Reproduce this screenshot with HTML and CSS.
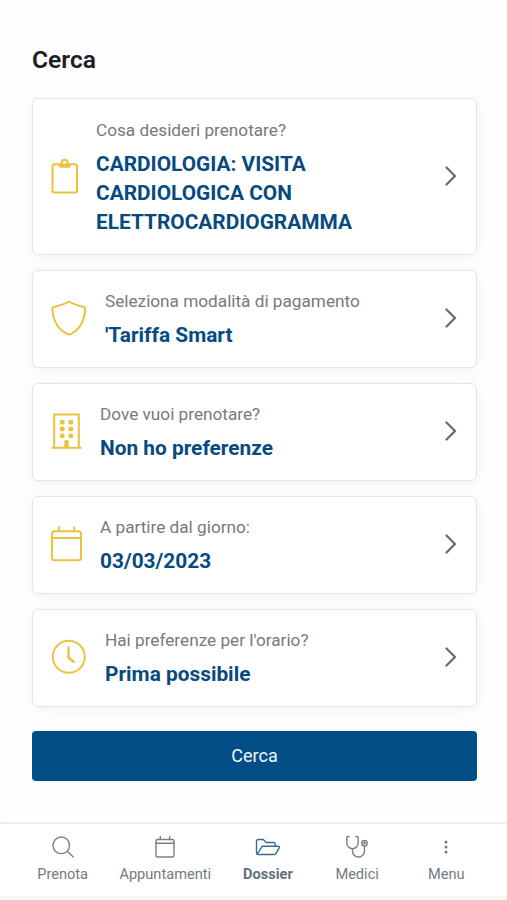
FILE: index.html
```html
<!DOCTYPE html>
<html lang="it">
<head>
  <meta charset="UTF-8">
  <meta name="viewport" content="width=device-width, initial-scale=1">
  <title>Cerca</title>
  <link rel="stylesheet" href="styles.css">
</head>
<body>

  <main>
    <h1>Cerca</h1>

    <a class="card" href="#">
      <svg class="icon" width="27" height="36" viewBox="0 0 27 36">
        <path d="M8 6.200H3.500a2 2 0 0 0-2 2V32.500a2 2 0 0 0 2 2h20.500a2 2 0 0 0 2-2V8.200a2 2 0 0 0-2-2h-5"/>
        <path class="solid" fill-rule="evenodd" d="M7.500 5.200H9.800V4.700a3.900 3.900 0 0 1 7.800 0v.5H20v2.300a2.300 2.300 0 0 1-2.300 2.300H9.800A2.300 2.300 0 0 1 7.500 7.500zM11.700 4.700a2 2 0 1 1 4 0v.8h-4z"/>
      </svg>
      <div class="text">
        <span class="label">Cosa desideri prenotare?</span>
        <strong>CARDIOLOGIA: VISITA CARDIOLOGICA CON ELETTROCARDIOGRAMMA</strong>
      </div>
      <svg class="chevron" width="12" height="20" viewBox="0 0 12 20"><path d="M1.500 1.500L10 10l-8.500 8.500"/></svg>
    </a>

    <a class="card" href="#">
      <svg class="icon" width="36" height="36" viewBox="0 0 36 36">
        <path d="M18 1.500C14 4 8 5.700 2.600 7c-1 .2-1.300 1-1.200 2C2 21 7 29.500 16.500 34.200q1.500.7 3 0C29 29.500 33.500 21 34.200 9c.1-1-.2-1.800-1.200-2C27.500 5.700 22 4 18 1.500z"/>
      </svg>
      <div class="text">
        <span class="label">Seleziona modalità di pagamento</span>
        <strong>'Tariffa Smart</strong>
      </div>
      <svg class="chevron" width="12" height="20" viewBox="0 0 12 20"><path d="M1.500 1.500L10 10l-8.500 8.500"/></svg>
    </a>

    <a class="card" href="#">
      <svg class="icon" width="31" height="36" viewBox="0 0 31 36">
        <path d="M3.200 34.500V1.500h24.600v33M.5 34.700h30"/>
        <g class="solid">
          <rect x="9" y="7" width="4.500" height="4.500" rx="1"/>
          <rect x="17.500" y="7" width="4.500" height="4.500" rx="1"/>
          <rect x="9" y="13.700" width="4.500" height="4.500" rx="1"/>
          <rect x="17.500" y="13.700" width="4.500" height="4.500" rx="1"/>
          <rect x="9" y="20.400" width="4.500" height="4.500" rx="1"/>
          <rect x="17.500" y="20.400" width="4.500" height="4.500" rx="1"/>
          <path d="M13.300 35v-6.500a1.500 1.500 0 0 1 1.500-1.500h1.400a1.500 1.500 0 0 1 1.500 1.500V35z"/>
        </g>
      </svg>
      <div class="text">
        <span class="label">Dove vuoi prenotare?</span>
        <strong>Non ho preferenze</strong>
      </div>
      <svg class="chevron" width="12" height="20" viewBox="0 0 12 20"><path d="M1.500 1.500L10 10l-8.500 8.500"/></svg>
    </a>

    <a class="card" href="#">
      <svg class="icon" width="31" height="36" viewBox="0 0 31 36">
        <rect x="1" y="5.200" width="29" height="29" rx="2.500"/>
        <path d="M1 12h29M7.900 .5v4.700M23.300 .5v4.700"/>
      </svg>
      <div class="text">
        <span class="label">A partire dal giorno:</span>
        <strong>03/03/2023</strong>
      </div>
      <svg class="chevron" width="12" height="20" viewBox="0 0 12 20"><path d="M1.500 1.500L10 10l-8.500 8.500"/></svg>
    </a>

    <a class="card" href="#">
      <svg class="icon" width="36" height="36" viewBox="0 0 36 36">
        <circle cx="17.800" cy="17.800" r="16"/>
        <path class="hands" d="M17.500 8.500v10.300l5.200 4"/>
      </svg>
      <div class="text">
        <span class="label">Hai preferenze per l'orario?</span>
        <strong>Prima possibile</strong>
      </div>
      <svg class="chevron" width="12" height="20" viewBox="0 0 12 20"><path d="M1.500 1.500L10 10l-8.500 8.500"/></svg>
    </a>

    <button type="button">Cerca</button>
  </main>

  <nav>
    <a href="#">
      <svg width="24" height="24" viewBox="0 0 24 24"><circle cx="10.300" cy="10.300" r="8.300"/><path d="M16.300 16.300l6 5.700"/></svg>
      <span>Prenota</span>
    </a>
    <a href="#">
      <svg width="24" height="24" viewBox="0 0 24 24"><rect x="3" y="4.500" width="18" height="17.500" rx="1.500"/><path d="M3 8.200h18M7.300 1.500v3M16.700 1.500v3"/></svg>
      <span>Appuntamenti</span>
    </a>
    <a href="#" class="active">
      <svg width="26" height="24" viewBox="0 0 26 24"><path d="M4.200 19.500H3a1.500 1.500 0 0 1-1.500-1.500V6A1.500 1.500 0 0 1 3 4.500h5.200l3 3h7.500A1.500 1.500 0 0 1 20.200 9v2.300M2.300 19l4.200-6.700q.6-1 1.600-1H23.500q1.500 0 .7 1.500l-3 5.400q-.7 1.300-2 1.300H3"/></svg>
      <span>Dossier</span>
    </a>
    <a href="#">
      <svg width="24" height="24" viewBox="0 0 24 24"><path d="M4 1.500H2.800q-1 0-1 1.500v5a5.700 5.700 0 0 0 11.400 0V3q0-1.500-1-1.500H11M7.500 13.700v2.300a6 6 0 0 0 12 0v-5"/><circle cx="19.500" cy="8.200" r="2.700"/><circle cx="19.500" cy="8.200" r=".7"/></svg>
      <span>Medici</span>
    </a>
    <a href="#">
      <svg class="dots" width="24" height="24" viewBox="0 0 24 24"><circle cx="12" cy="7" r="1.500"/><circle cx="12" cy="12" r="1.500"/><circle cx="12" cy="17" r="1.500"/></svg>
      <span>Menu</span>
    </a>
  </nav>

</body>
</html>
```
FILE: styles.css
```css
* { box-sizing: border-box; }
body { margin: 0; height: 900px; padding-bottom: 4px; display: flex; flex-direction: column; font-family: Roboto, "Liberation Sans", sans-serif; background: #f7f7f7; }
a { text-decoration: none; }

main { flex: 1; padding: 42px 30px 0 32px; background: #fefefe; }
h1 { margin: 0 0 20px; font-size: 24.6px; line-height: 36px; font-weight: 600; color: #1b2027; }

.card { display: flex; align-items: center; height: 98px; margin-bottom: 15px; padding: 0 20px 0 18px; background: #fff; border: 1px solid #e4e5e6; border-radius: 6px; box-shadow: 0 2px 14px rgba(0, 0, 0, 0.05); }
.card:first-of-type { height: 157px; }
.icon { flex: none; margin: 0 18px 2px 0; fill: none; stroke: #ecc13e; stroke-width: 2; }
.icon .solid { fill: #ecc13e; stroke: none; }
.icon .hands { stroke-width: 2.4; stroke-linecap: round; stroke-linejoin: round; }
.text { flex: 1; padding: 1px 40px 0 0; }
.label { display: block; margin-bottom: 7px; font-size: 17.2px; line-height: 26px; color: #757a80; }
.card strong { display: block; font-size: 20.85px; line-height: 29.3px; font-weight: 700; color: #064a80; }
.chevron { flex: none; margin: 0 -1px 2px 0; fill: none; stroke: #6a6e74; stroke-width: 2.3; stroke-linecap: round; stroke-linejoin: round; }

button { display: block; width: 445px; height: 50px; margin-top: 24px; padding: 0 0 1px; border: none; border-radius: 4px; background: #004e85; color: #f2f7fb; font: 18px Roboto, sans-serif; }

nav { display: grid; grid-template-columns: 1fr 1.3fr 1fr 1fr 1fr; height: 72px; padding: 11px 16px 0 18px; background: #fff; box-shadow: 0 -1px 3px rgba(0, 0, 0, 0.12); }
nav a { display: flex; flex-direction: column; align-items: center; gap: 5px; font-size: 14.6px; line-height: 20px; color: #747b81; }
nav svg { fill: none; stroke: #7b8085; stroke-width: 1.4; stroke-linecap: round; stroke-linejoin: round; }
nav .dots { fill: #74797e; stroke: none; }
nav .active { font-weight: 700; color: #64707a; }
nav .active svg { stroke: #3a6a8d; }
```
